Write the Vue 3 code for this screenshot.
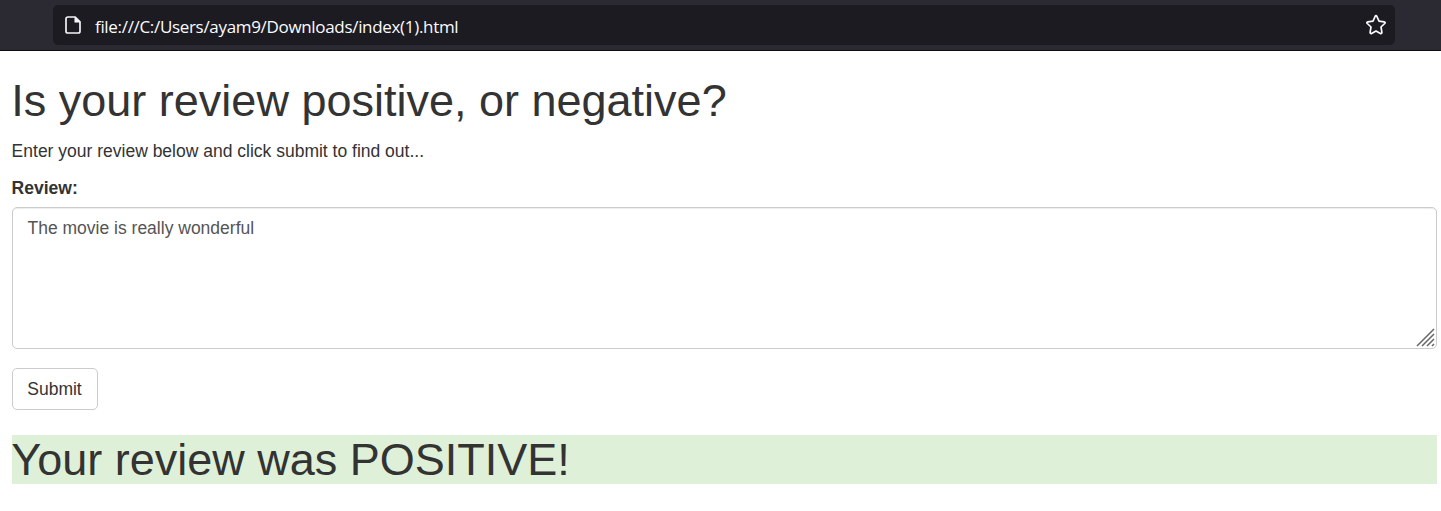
<script setup>
import { ref } from 'vue'

const review = ref('The movie is really wonderful')
const verdict = ref('POSITIVE')
</script>

<template>
  <div class="window">
    <header class="toolbar">
      <div class="urlbar">
        <svg class="page-icon" width="16" height="18" viewBox="0 0 16 18">
          <path d="M3 1H10.2L15 5.8V15.2Q15 17 13.2 17H2.8Q1 17 1 15.2V2.8Q1 1 3 1Z" fill="none" stroke="#f4f4f6" stroke-width="1.7" stroke-linejoin="round" />
          <path d="M9.5 1V6.5H15Z" fill="#fbfbfe" />
        </svg>
        <span class="url">file:///C:/Users/ayam9/Downloads/index(1).html</span>
        <svg class="star" width="22" height="22" viewBox="0 0 22 22">
          <path d="M10.1 2.5Q11 .9 11.9 2.5L14 7.1L19.1 7.8Q20.9 8.2 19.7 9.5L16 13L16.9 18.3Q16.9 20 15.4 19.4L11 17L6.6 19.4Q5.1 20 5.1 18.3L6 13L2.3 9.5Q1.1 8.2 2.9 7.8L8 7.1Z" fill="none" stroke="#fbfbfe" stroke-width="1.7" stroke-linejoin="round" />
        </svg>
      </div>
    </header>
    <main class="content">
      <h1>Is your review positive, or negative?</h1>
      <p>Enter your review below and click submit to find out...</p>
      <label for="review">Review:</label>
      <div class="field">
        <textarea id="review" v-model="review" spellcheck="false"></textarea>
        <svg class="grip" width="19" height="19" viewBox="0 0 19 19">
          <path d="M1 18L18 1M6 18L18 6M11 18L18 11M16 18L18 16" stroke="#666" stroke-width="1.5" />
        </svg>
      </div>
      <button type="button">Submit</button>
      <h1 class="result">Your review was {{ verdict }}!</h1>
    </main>
  </div>
</template>

<style>
body {
  margin: 0;
  background: #fff;
}
</style>

<style scoped>
.window {
  height: 511px;
  overflow: hidden;
  font-family: "Liberation Sans", Arial, sans-serif;
  font-size: 17.5px;
  line-height: 25px;
  color: #333;
}
.toolbar {
  box-sizing: border-box;
  height: 51px;
  padding: 5px 46px 5px 53px;
  background: #2b2a33;
  border-bottom: 1px solid #0c0c0d;
}
.urlbar {
  box-sizing: border-box;
  height: 40px;
  padding: 0 8px 0 12px;
  display: flex;
  align-items: center;
  background: #1c1b22;
  border-radius: 5px;
}
.page-icon {
  flex: none;
}
.url {
  flex: 1;
  margin: 3px 0 0 14px;
  color: #fbfbfe;
  font-family: "Open Sans", "Noto Sans", sans-serif;
  font-size: 17px;
  letter-spacing: -0.32px;
  white-space: nowrap;
}
.star {
  flex: none;
}
.content {
  padding: 25px 4px 0 12px;
}
h1 {
  margin: 0 0 13.5px;
  font-size: 45px;
  font-weight: 500;
  line-height: 49.5px;
  text-indent: -0.7px;
}
p {
  margin: 0 0 11.5px;
  text-indent: -0.4px;
}
label {
  display: block;
  margin-bottom: 6.25px;
  font-weight: 700;
  text-indent: -0.4px;
}
.field {
  position: relative;
  height: 142px;
  margin-bottom: 19px;
}
textarea {
  display: block;
  box-sizing: border-box;
  width: 100%;
  height: 100%;
  margin: 0;
  padding: 8px 14.5px;
  border: 1px solid #ccc;
  border-radius: 5px;
  box-shadow: inset 0 1px 1px rgba(0, 0, 0, 0.075);
  background: #fff;
  color: #555;
  font: inherit;
  resize: none;
  outline: none;
}
.grip {
  position: absolute;
  right: 2px;
  bottom: 2px;
}
button {
  display: block;
  box-sizing: border-box;
  width: 86px;
  height: 42px;
  margin: 0;
  padding: 2px 1px 0 0;
  border: 1px solid #ccc;
  border-radius: 5px;
  background: #fff;
  color: #333;
  font: inherit;
}
.result {
  margin-top: 25px;
  background: #dff0d8;
}
</style>
